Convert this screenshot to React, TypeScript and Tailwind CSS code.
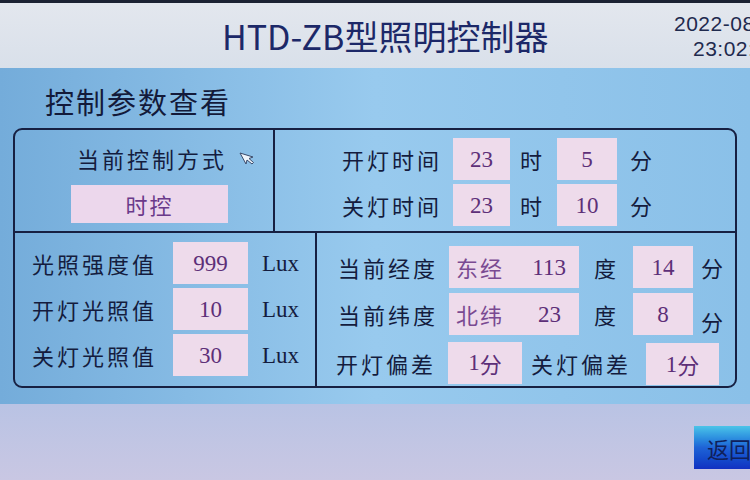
import React from "react";

const cjk = "font-['Noto_Sans_CJK_SC',sans-serif]";
const serif = "font-['Liberation_Serif','Noto_Sans_CJK_SC',serif]";

function Val({
  w,
  h = 42,
  split = false,
  children,
  className = "",
}: {
  w: number;
  h?: number;
  split?: boolean;
  children: React.ReactNode;
  className?: string;
}) {
  return (
    <div
      className={`flex shrink-0 items-center ${split ? "justify-between px-[7px]" : "justify-center"} bg-[#eedbeb] text-[23px] leading-none text-[#5d2f78] ${serif} ${className}`}
      style={{ width: w, height: h }}
    >
      {children}
    </div>
  );
}

function Label({ w, children }: { w: number; children: React.ReactNode }) {
  return (
    <div className={`shrink-0 text-[22px] leading-none tracking-[3px] text-[#141c3e] ${cjk}`} style={{ width: w }}>
      {children}
    </div>
  );
}

function Unit({ children, className = "" }: { children: React.ReactNode; className?: string }) {
  return <div className={`shrink-0 text-[22px] leading-none text-[#141c3e] ${cjk} ${className}`}>{children}</div>;
}

function Pointer() {
  return (
    <svg width="16" height="14" viewBox="0 0 16 14" className="ml-[12px] mt-[2px]">
      <path d="M1 1 L7 12 L8 8 L13 12 L14.5 10.5 L10 6.5 L14 5 Z" fill="#eef4fb" stroke="#3a4a6a" strokeWidth="1" strokeLinejoin="round" />
    </svg>
  );
}

export default function App() {
  return (
    <div className="flex h-[480px] w-[750px] flex-col overflow-hidden bg-[#c6c5e2]">
      {/* top bezel */}
      <div className="h-[3px] shrink-0 bg-[#1c2233]" />

      {/* title bar */}
      <div className="flex h-[65px] shrink-0 items-center overflow-hidden bg-gradient-to-b from-[#e3e7ee] to-[#d9e0ea]">
        <div className={`ml-[222px] w-[340px] shrink-0 text-[34px] leading-none text-[#1c2868] ${cjk}`}>HTD-ZB型照明控制器</div>
        <div className="ml-[112px] flex w-[76px] shrink-0 flex-col overflow-hidden text-[21px] tracking-[0.5px] text-[#1f2a4e] font-['Liberation_Sans',sans-serif]">
          <div className="h-[25px] whitespace-nowrap leading-[25px]">2022-08-16</div>
          <div className="ml-[19px] h-[25px] whitespace-nowrap leading-[25px]">23:02:45</div>
        </div>
      </div>

      {/* parameter panel */}
      <div className="flex h-[336px] shrink-0 flex-col bg-gradient-to-r from-[#74acda] via-[#98caee] to-[#8ac0e8]">
        <div className={`ml-[45px] mt-[18px] h-[30px] text-[29px] leading-[30px] tracking-[2px] text-[#131a3a] ${cjk}`}>控制参数查看</div>

        <div className="ml-[13px] mt-[12px] flex h-[260px] w-[724px] flex-col rounded-[9px] border-2 border-[#172042]">
          {/* upper row */}
          <div className="flex h-[103px] shrink-0 border-b-2 border-[#172042]">
            <div className="flex w-[260px] shrink-0 flex-col border-r-2 border-[#172042]">
              <div className="ml-[62px] mt-[17px] flex items-center">
                <Label w={150}>当前控制方式</Label>
                <Pointer />
              </div>
              <div className={`ml-[56px] mt-[16px] flex h-[38px] w-[157px] items-center justify-center bg-[#ecd7ec] text-[22px] leading-none tracking-[2px] text-[#6a3a8a] ${cjk}`}>
                时控
              </div>
            </div>
            <div className="flex flex-1 flex-col gap-[4px] pt-[8px]">
              <div className="ml-[67px] flex items-center">
                <Label w={111}>开灯时间</Label>
                <Val w={57}>23</Val>
                <Unit className="ml-[10px]">时</Unit>
                <Val w={60} className="ml-[15px] bg-[#ece4f0]">5</Val>
                <Unit className="ml-[13px]">分</Unit>
              </div>
              <div className="ml-[67px] flex items-center">
                <Label w={111}>关灯时间</Label>
                <Val w={57}>23</Val>
                <Unit className="ml-[10px]">时</Unit>
                <Val w={60} className="ml-[15px]">10</Val>
                <Unit className="ml-[13px]">分</Unit>
              </div>
            </div>
          </div>

          {/* lower row */}
          <div className="flex flex-1">
            <div className="flex w-[302px] shrink-0 flex-col gap-[4px] border-r-2 border-[#172042] pt-[9px]">
              {[
                ["光照强度值", "999"],
                ["开灯光照值", "10"],
                ["关灯光照值", "30"],
              ].map(([l, v]) => (
                <div key={l} className="ml-[17px] flex items-center">
                  <Label w={141}>{l}</Label>
                  <Val w={75}>{v}</Val>
                  <div className={`ml-[14px] text-[23px] leading-none text-[#141c3e] ${serif}`}>Lux</div>
                </div>
              ))}
            </div>
            <div className="flex flex-1 flex-col gap-[5px] pt-[13px]">
              <div className="ml-[21px] flex items-center">
                <Label w={111}>当前经度</Label>
                <Val w={130} split>
                  <span className={`text-[22px] tracking-[2px] text-[#7a4a92] ${cjk}`}>东经</span>
                  <span className="mr-[6px]">113</span>
                </Val>
                <Unit className="ml-[15px]">度</Unit>
                <Val w={60} className="ml-[17px]">14</Val>
                <Unit className="ml-[8px]">分</Unit>
              </div>
              <div className="ml-[21px] flex items-center">
                <Label w={111}>当前纬度</Label>
                <Val w={130} split>
                  <span className={`text-[22px] tracking-[2px] text-[#7a4a92] ${cjk}`}>北纬</span>
                  <span className="mr-[11px]">23</span>
                </Val>
                <Unit className="ml-[15px]">度</Unit>
                <Val w={60} className="ml-[17px]">8</Val>
                <Unit className="ml-[8px] mt-[14px]">分</Unit>
              </div>
              <div className="ml-[19px] flex items-center">
                <Label w={112}>开灯偏差</Label>
                <Val w={74}>1<span className={`text-[22px] ${cjk}`}>分</span></Val>
                <div className="ml-[9px]">
                  <Label w={115}>关灯偏差</Label>
                </div>
                <Val w={73} className="mt-[3px]">1<span className={`text-[22px] ${cjk}`}>分</span></Val>
              </div>
            </div>
          </div>
        </div>
      </div>

      {/* footer */}
      <div className="flex flex-1 items-start justify-end bg-gradient-to-b from-[#b9c3e4] to-[#c9c7e3] pt-[22px]">
        <div className={`flex h-[43px] w-[56px] shrink-0 items-center overflow-hidden whitespace-nowrap pl-[13px] bg-gradient-to-b from-[#4cc4e8] via-[#1f63d6] to-[#1230c2] text-[22px] leading-none text-[#10205a] ${cjk}`}>
          返回
        </div>
      </div>
    </div>
  );
}
